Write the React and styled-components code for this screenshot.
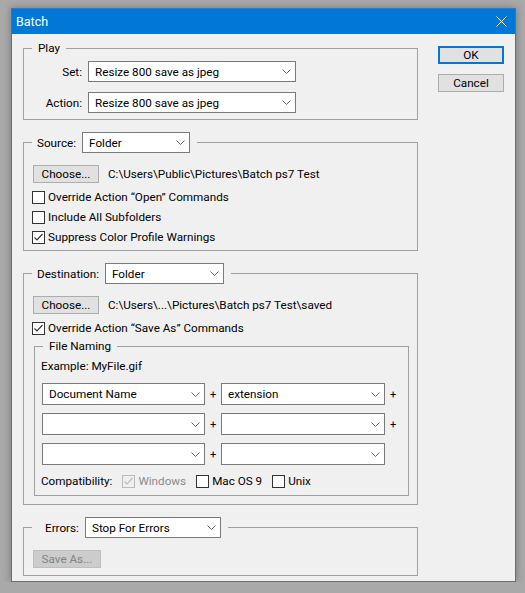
import styled, { createGlobalStyle } from 'styled-components'

const Global = createGlobalStyle`
	body {
		margin: 0;
		background: #a9a9a9;
		font-family: Roboto, 'Liberation Sans', sans-serif;
		font-size: 11.7px;
		color: #000;
	}
	* {
		box-sizing: border-box;
	}
`

const Window = styled.div`
	margin: 8px 0 0 11px;
	width: 505px;
	height: 574px;
	border: 1px solid #2a7cc9;
	background: #f0f0f0;
	box-shadow: 0 0 8px rgba(0, 0, 0, 0.3);
	display: flex;
	flex-direction: column;
	overflow: hidden;
`

const TitleBar = styled.div`
	height: 25px;
	flex: none;
	background: #0078d7;
	color: #fff;
	display: flex;
	align-items: center;
	justify-content: space-between;
	padding: 0 8px 0 4px;
	font-size: 12.5px;
`

const Body = styled.div`
	display: flex;
	align-items: flex-start;
	gap: 20px;
	padding: 6px 11px 0 11px;
`

const LeftCol = styled.div`
	width: 395px;
	display: flex;
	flex-direction: column;
	gap: 12px;
`

const RightCol = styled.div`
	width: 66px;
	margin-top: 6px;
	display: flex;
	flex-direction: column;
	gap: 10px;
`

const Group = styled.fieldset`
	margin: ${p => p.$margin || '0'};
	padding: 0;
	border: 1px solid #a0a0a0;
	min-width: 0;
`

const Legend = styled.legend`
	margin-left: 8px;
	padding: 0 ${p => p.$right ?? 7}px 0 ${p => p.$left ?? 5}px;
	display: flex;
	align-items: center;
	gap: 6px;
	line-height: 16px;
`

const PlayGrid = styled.div`
	display: grid;
	grid-template-columns: 58px 208px;
	column-gap: 6px;
	row-gap: 10px;
	align-items: center;
	padding: 5px 0 6px 0;
`

const FieldLabel = styled.span`
	text-align: right;
`

const Content = styled.div`
	padding: ${p => p.$pad};
	display: flex;
	flex-direction: column;
	gap: ${p => p.$gap || 0}px;
`

const Dropdown = styled.div`
	width: ${p => p.$w}px;
	height: ${p => p.$h || 21}px;
	border: 1px solid #7a7a7a;
	background: #fff;
	display: flex;
	align-items: center;
	justify-content: space-between;
	padding: 0 4px 0 6px;
	white-space: nowrap;
`

const Button = styled.div`
	width: ${p => p.$w || 66}px;
	height: 18px;
	flex: none;
	display: flex;
	align-items: center;
	justify-content: center;
	background: ${p => (p.$disabled ? '#cccccc' : '#e1e1e1')};
	border: ${p => (p.$default ? '2px solid #0078d7' : p.$disabled ? '1px solid #bfbfbf' : '1px solid #adadad')};
	color: ${p => (p.$disabled ? '#838383' : '#000')};
`

const PathRow = styled.div`
	display: flex;
	align-items: center;
	gap: 9px;
`

const CheckRow = styled.label`
	height: 20px;
	display: flex;
	align-items: center;
	gap: 3px;
	margin-left: ${p => p.$ml ?? -1}px;
	margin-top: ${p => p.$mt || 0}px;
	color: ${p => (p.$disabled ? '#8a8a8a' : '#000')};
	white-space: nowrap;
`

const Box = styled.span`
	width: 13px;
	height: 13px;
	flex: none;
	border: 1px solid ${p => (p.$disabled ? '#bcbcbc' : '#333')};
	background: ${p => (p.$disabled ? '#f0f0f0' : '#fff')};
	display: flex;
	align-items: center;
	justify-content: center;
`

const Example = styled.div`
	line-height: 16px;
	margin-left: -1px;
`

const NamingGrid = styled.div`
	display: grid;
	grid-template-columns: 163px 16px 164px 16px;
	row-gap: 8px;
	align-items: center;
	margin-top: 9px;
`

const Plus = styled.span`
	text-align: center;
	font-size: 11px;
`

const CompatRow = styled.div`
	display: flex;
	align-items: center;
	gap: 10px;
	margin-top: 6px;
	margin-left: -1px;
`

function Chevron() {
	return (
		<svg width='9' height='5' viewBox='0 0 9 5'>
			<path d='M0.5 0.5 L4.5 4.5 L8.5 0.5' fill='none' stroke='#666' strokeWidth='1' />
		</svg>
	)
}

function Select({ value, w, h }) {
	return (
		<Dropdown $w={w} $h={h}>
			<span>{value}</span>
			<Chevron />
		</Dropdown>
	)
}

function Check({ checked, disabled, children, ml, mt }) {
	const color = disabled ? '#bcbcbc' : '#333'
	return (
		<CheckRow $disabled={disabled} $ml={ml} $mt={mt}>
			<Box $disabled={disabled}>
				{checked && (
					<svg width='11' height='11' viewBox='0 0 11 11'>
						<path d='M1.5 5.5 L4 8 L9.5 2' fill='none' stroke={color} strokeWidth='1.2' />
					</svg>
				)}
			</Box>
			{children}
		</CheckRow>
	)
}

export default function App() {
	const naming = [
		['Document Name', 'extension', true],
		['', '', true],
		['', '', false],
	]
	return (
		<>
			<Global />
			<Window>
				<TitleBar>
					<span>Batch</span>
					<svg width='11' height='11' viewBox='0 0 11 11'>
						<path d='M0.5 0.5 L10.5 10.5 M10.5 0.5 L0.5 10.5' stroke='#fff' strokeWidth='1' />
					</svg>
				</TitleBar>
				<Body>
					<LeftCol>
						<Group>
							<Legend $left={6} $right={6}>Play</Legend>
							<PlayGrid>
								<FieldLabel>Set:</FieldLabel>
								<Select value='Resize 800 save as jpeg' w={208} />
								<FieldLabel>Action:</FieldLabel>
								<Select value='Resize 800 save as jpeg' w={208} />
							</PlayGrid>
						</Group>

						<Group>
							<Legend>
								<span>Source:</span>
								<Select value='Folder' w={108} />
							</Legend>
							<Content $pad='12px 8px 3px 9px' $gap={4}>
								<PathRow>
									<Button>Choose...</Button>
									<span>C:\Users\Public\Pictures\Batch ps7 Test</span>
								</PathRow>
								<div>
									<Check>Override Action “Open” Commands</Check>
									<Check>Include All Subfolders</Check>
									<Check checked>Suppress Color Profile Warnings</Check>
								</div>
							</Content>
						</Group>

						<Group>
							<Legend>
								<span>Destination:</span>
								<Select value='Folder' w={119} />
							</Legend>
							<Content $pad='12px 8px 8px 9px'>
								<PathRow>
									<Button>Choose...</Button>
									<span>C:\Users\...\Pictures\Batch ps7 Test\saved</span>
								</PathRow>
								<Check checked mt={4}>Override Action “Save As” Commands</Check>
								<Group $margin='0 0 0 1px'>
									<Legend $left={6} $right={6}>File Naming</Legend>
									<Content $pad='4px 0 4px 7px'>
										<Example>Example: MyFile.gif</Example>
										<NamingGrid>
											{naming.map(([a, b, plus], i) => (
												<>
													<Select key={'a' + i} value={a} w={163} h={22} />
													<Plus>+</Plus>
													<Select key={'b' + i} value={b} w={164} h={22} />
													<Plus>{plus ? '+' : ''}</Plus>
												</>
											))}
										</NamingGrid>
										<CompatRow>
											<span>Compatibility:</span>
											<Check checked disabled ml={0}>Windows</Check>
											<Check ml={0}>Mac OS 9</Check>
											<Check ml={0}>Unix</Check>
										</CompatRow>
									</Content>
								</Group>
							</Content>
						</Group>

						<Group>
							<Legend $left={13}>
								<span>Errors:</span>
								<Select value='Stop For Errors' w={136} />
							</Legend>
							<Content $pad='12px 8px 7px 9px'>
								<Button $w={68} $disabled>Save As...</Button>
							</Content>
						</Group>
					</LeftCol>
					<RightCol>
						<Button $default>OK</Button>
						<Button>Cancel</Button>
					</RightCol>
				</Body>
			</Window>
		</>
	)
}
